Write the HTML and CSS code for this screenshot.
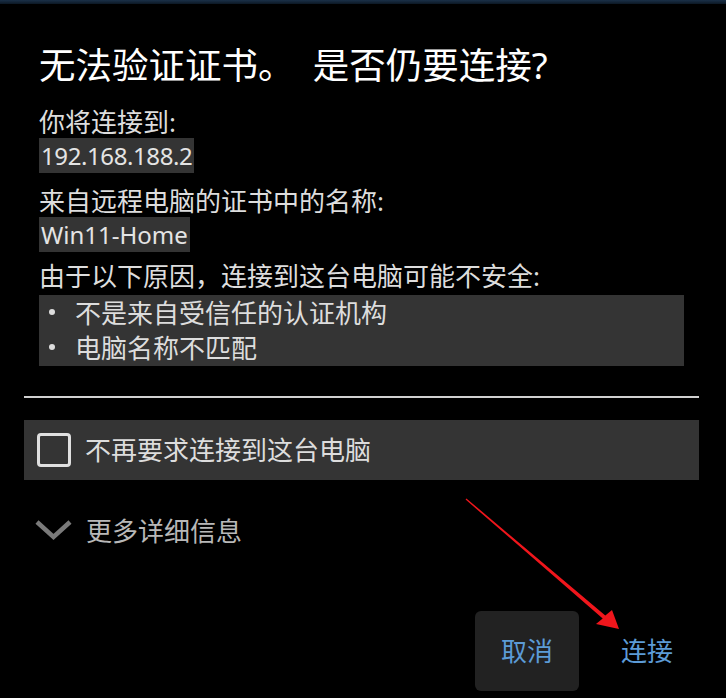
FILE: index.html
```html
<!DOCTYPE html>
<html lang="zh-CN">
<head>
  <meta charset="UTF-8">
  <title>无法验证证书</title>
  <link rel="stylesheet" href="styles.css">
</head>
<body>
  <div class="topbar"></div>

  <div class="dialog">
    <div class="content">
      <h1 class="title">无法验证证书。&ensp;是否仍要连接?</h1>

      <div class="label first">你将连接到:</div>
      <div class="value ip">192.168.188.2</div>

      <div class="label second">来自远程电脑的证书中的名称:</div>
      <div class="value">Win11-Home</div>

      <div class="label third">由于以下原因，连接到这台电脑可能不安全:</div>
      <ul class="reasons">
        <li><span class="dot"></span>不是来自受信任的认证机构</li>
        <li><span class="dot"></span>电脑名称不匹配</li>
      </ul>
    </div>

    <hr class="divider">

    <label class="check-row">
      <span class="checkbox"></span>
      <span class="check-text">不再要求连接到这台电脑</span>
    </label>

    <div class="more">
      <svg class="chevron" width="40" height="24" viewBox="0 0 40 24">
        <polyline points="3,4 19.5,19 36,4" fill="none" stroke="#7a7a7a" stroke-width="4.5"/>
      </svg>
      <span>更多详细信息</span>
    </div>

    <div class="buttons">
      <button class="btn cancel">取消</button>
      <button class="btn">连接</button>
    </div>
  </div>

  <!-- 标注箭头 -->
  <svg class="arrow" width="726" height="698" viewBox="0 0 726 698">
    <polygon points="466.4,498.4 605.3,615.5 612,610 619,629 596,624 602.7,618.5 465.6,499.6" fill="#f0161c"/>
  </svg>
</body>
</html>
```

FILE: styles.css
```css
body {
  background-color: #000;
  color: #ddd;
  font-family: 'Noto Sans', 'Noto Sans CJK SC', sans-serif;
  margin: 0;
  width: 726px;
  height: 698px;
  overflow: hidden;
  position: relative;
}
.topbar { height: 4px; background: linear-gradient(#1a3048, #0c1824); }
.dialog { padding: 0 27px 0 24px; }
.content { padding: 0 15px; }

.title {
  margin: 39px 0 0 0;
  font-size: 36.5px;
  line-height: 44px;
  font-weight: normal;
  color: #fff;
  white-space: nowrap;
}

.label { font-size: 26px; line-height: 32px; white-space: nowrap; }
.label.first { margin-top: 19px; }
.label.second { margin-top: 12px; }
.label.third { margin-top: 8px; }

.value {
  display: inline-block;
  background-color: #343434;
  color: #e4e4e4;
  font-size: 24px;
  line-height: 35px;
  padding: 0 2px;
  vertical-align: top;
}
.value.ip { letter-spacing: -0.4px; }

.reasons {
  list-style: none;
  margin: 3px 0 0 0;
  padding: 1px 0 0 10px;
  background-color: #343434;
  font-size: 26px;
}
.reasons li { display: flex; align-items: center; height: 35px; padding-bottom: 3px; box-sizing: border-box; }
.dot { width: 6px; height: 6px; border-radius: 50%; background: #ddd; margin-right: 20px; }

.divider { margin: 30px 0 0 0; border: none; height: 2px; background: #d0d0d0; }

.check-row {
  margin-top: 22px;
  height: 60px;
  display: flex;
  align-items: center;
  background-color: #343434;
  padding-left: 13px;
  font-size: 26px;
}
.checkbox {
  width: 28px; height: 28px;
  border: 3px solid #e0e0e0;
  border-radius: 4px;
  margin-right: 14px;
}
.check-text { margin-bottom: 3px; }

.more {
  margin-top: 30px;
  height: 40px;
  display: flex;
  align-items: center;
  padding-left: 10px;
  font-size: 26px;
  color: #b8b8b8;
}
.chevron { margin-right: 12px; }

.buttons {
  margin-top: 61px;
  display: flex;
  justify-content: flex-end;
  gap: 16px;
}
.btn {
  width: 104px; height: 80px;
  border: none;
  border-radius: 6px;
  background: transparent;
  color: #5c9bd6;
  font-family: 'Noto Sans', 'Noto Sans CJK SC', sans-serif;
  font-size: 26px;
  padding: 0 0 3px 0;
}
.btn.cancel { background-color: #222; }

.arrow { position: absolute; left: 0; top: 0; pointer-events: none; }
```
